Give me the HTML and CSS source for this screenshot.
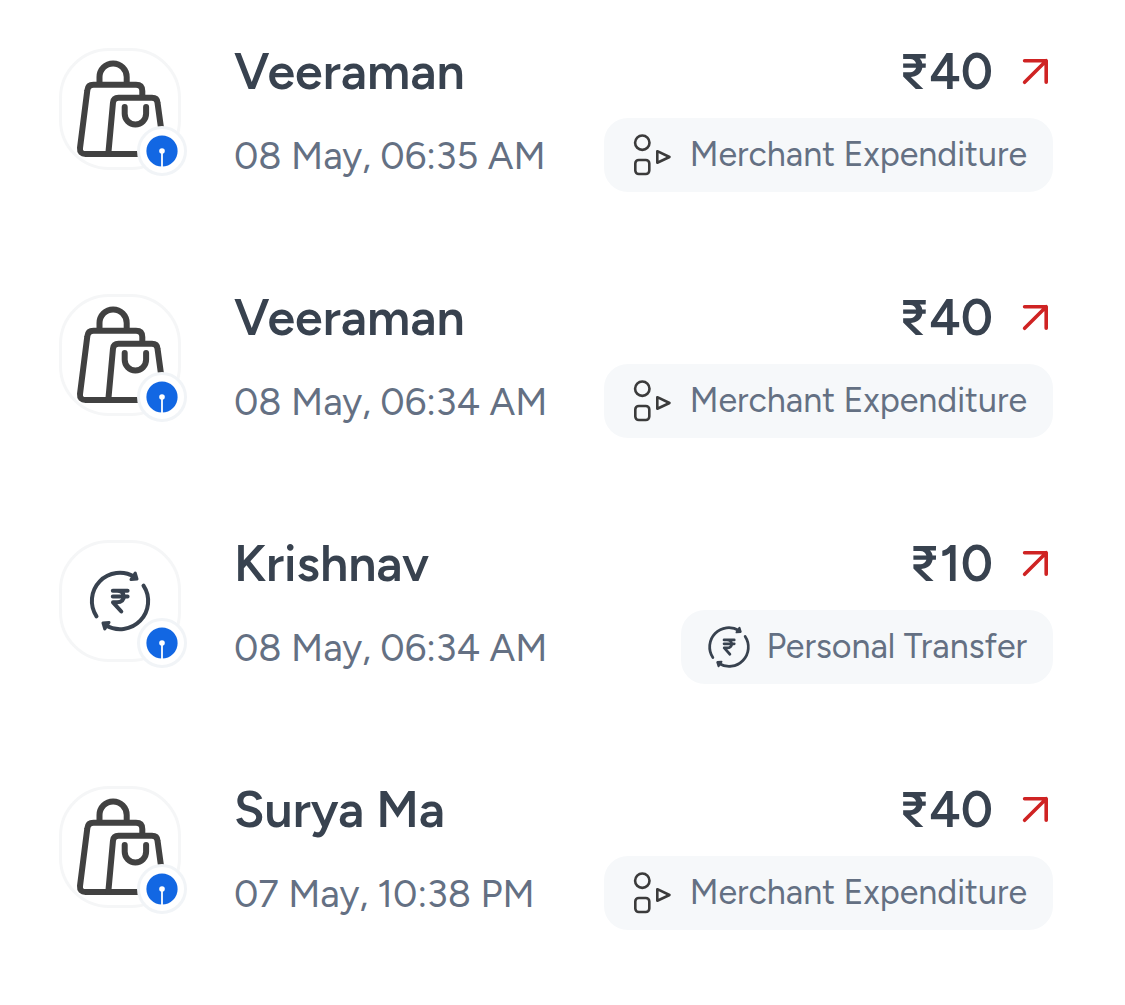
FILE: index.html
```html
<!DOCTYPE html>
<html lang="en">
<head>
<meta charset="utf-8">
<meta name="viewport" content="width=device-width, initial-scale=1">
<title>Transactions</title>
<link rel="stylesheet" href="styles.css">
</head>
<body>
<svg class="sprite" aria-hidden="true">
  <symbol id="bags" viewBox="0 0 116 116">
    <g transform="translate(-3 -3)" fill="none" stroke="#414141" stroke-width="6" stroke-linecap="round" stroke-linejoin="round">
      <path d="M40.500 36V29a13.600 13.600 0 0 1 27.200 0v7"/>
      <path d="M83.300 47.500V43q0-6.300-6.300-6.300H34.500q-5.700 0-6.200 5.700L21 100q-.4 6 5.600 6H94"/>
      <path d="M49.300 106 54 54.500q.5-4.800 5.500-4.800h33.500q5 0 5.500 4.800L102 80"/>
      <path d="M65.700 59v6.700a10.700 10.700 0 0 0 21.400 0V59"/>
    </g>
  </symbol>
  <symbol id="transfer" viewBox="-32 -32 64 64">
    <g fill="none" stroke="#38424f" stroke-width="4" stroke-linecap="round" stroke-linejoin="round">
      <path d="M-23.500 15.300A28 28 0 0 1 14.500-24"/>
      <path d="M23.500-15.300A28 28 0 0 1-14.500 24"/>
      <path stroke-width="3" fill="#38424f" d="M15.200-28 17-22 11-21.400z"/>
      <path stroke-width="3" fill="#38424f" d="M-15.200 28-17 22-11 21.400z"/>
      <path d="M-7.200-10.300H7.600M-7.200-4.600H7.600M-3-10.300C6-10.300 6.500 1.300-3 1.300H-7L1.300 10.500"/>
    </g>
  </symbol>
  <symbol id="merchant" viewBox="0 0 44 44">
    <g fill="none" stroke="#3b3b3b" stroke-width="2.600" stroke-linejoin="round">
      <circle cx="12.300" cy="9.700" r="7.200"/>
      <rect x="5.300" y="27" width="14" height="14" rx="3.500"/>
      <path d="M27.300 18.200 39.500 24 27.300 29.700z"/>
    </g>
  </symbol>
  <symbol id="outgoing" viewBox="0 0 32 32">
    <path d="M3.600 4.700H25.200V26.300M25.200 4.700 3.600 26.300" fill="none" stroke="#cf2323" stroke-width="3.600" stroke-linecap="round" stroke-linejoin="round"/>
  </symbol>
  <symbol id="bank" viewBox="0 0 32 32">
    <circle cx="16" cy="16" r="15.600" fill="#1267e3"/>
    <circle cx="16" cy="16" r="2.800" fill="#fff"/>
    <path d="M16 16V32" stroke="#fff" stroke-width="1.800"/>
  </symbol>
</svg>

<main>
  <ul class="transactions">
    <li class="transaction">
      <div class="avatar"><svg class="avatar-icon"><use href="#bags"/></svg><span class="badge"><svg class="bank-icon"><use href="#bank"/></svg></span></div>
      <div class="details"><h2 class="name">Veeraman</h2><time class="date">08 May, 06:35 AM</time></div>
      <div class="summary">
        <p class="amount">₹40<svg class="arrow"><use href="#outgoing"/></svg></p>
        <span class="category"><svg class="category-icon"><use href="#merchant"/></svg>Merchant Expenditure</span>
      </div>
    </li>
    <li class="transaction">
      <div class="avatar"><svg class="avatar-icon"><use href="#bags"/></svg><span class="badge"><svg class="bank-icon"><use href="#bank"/></svg></span></div>
      <div class="details"><h2 class="name">Veeraman</h2><time class="date">08 May, 06:34 AM</time></div>
      <div class="summary">
        <p class="amount">₹40<svg class="arrow"><use href="#outgoing"/></svg></p>
        <span class="category"><svg class="category-icon"><use href="#merchant"/></svg>Merchant Expenditure</span>
      </div>
    </li>
    <li class="transaction">
      <div class="avatar"><svg class="avatar-icon avatar-icon-small"><use href="#transfer"/></svg><span class="badge"><svg class="bank-icon"><use href="#bank"/></svg></span></div>
      <div class="details"><h2 class="name">Krishnav</h2><time class="date">08 May, 06:34 AM</time></div>
      <div class="summary">
        <p class="amount">₹10<svg class="arrow"><use href="#outgoing"/></svg></p>
        <span class="category"><svg class="category-icon"><use href="#transfer"/></svg>Personal Transfer</span>
      </div>
    </li>
    <li class="transaction">
      <div class="avatar"><svg class="avatar-icon"><use href="#bags"/></svg><span class="badge"><svg class="bank-icon"><use href="#bank"/></svg></span></div>
      <div class="details"><h2 class="name">Surya Ma</h2><time class="date">07 May, 10:38 PM</time></div>
      <div class="summary">
        <p class="amount">₹40<svg class="arrow"><use href="#outgoing"/></svg></p>
        <span class="category"><svg class="category-icon"><use href="#merchant"/></svg>Merchant Expenditure</span>
      </div>
    </li>
  </ul>
</main>
</body>
</html>
```
FILE: styles.css
```css
* {
  box-sizing: border-box;
}

body {
  margin: 0;
  background: #fff;
  color: #38424f;
  font-family: Figtree, Inter, "Liberation Sans", sans-serif;
}

.sprite {
  position: absolute;
  width: 0;
  height: 0;
}

.transactions {
  display: grid;
  gap: 96px;
  margin: 0;
  padding: 42px 72px 42px 59px;
  list-style: none;
}

.transaction {
  display: flex;
  align-items: flex-start;
}

.avatar {
  position: relative;
  display: flex;
  flex: none;
  align-items: center;
  justify-content: center;
  width: 122px;
  height: 122px;
  margin: 6px 53px 0 0;
  border: 3px solid #f5f6f7;
  border-radius: 50px;
}

.avatar-icon {
  width: 116px;
  height: 116px;
}

.avatar-icon-small {
  width: 64px;
  height: 64px;
}

.badge {
  position: absolute;
  right: -9px;
  bottom: -9px;
  display: flex;
  align-items: center;
  justify-content: center;
  width: 50px;
  height: 50px;
  border: 3px solid #f1f4f7;
  border-radius: 50%;
  background: #fff;
}

.bank-icon {
  width: 32px;
  height: 32px;
}

.details {
  display: flex;
  flex: 1;
  flex-direction: column;
  gap: 30px;
  white-space: nowrap;
}

.name,
.amount {
  margin: 0;
  font-size: 50px;
  font-weight: 600;
  line-height: 60px;
}

.date {
  color: #647083;
  font-size: 38px;
  line-height: 48px;
}

.summary {
  display: flex;
  flex: none;
  flex-direction: column;
  align-items: flex-end;
  gap: 16px;
}

.amount {
  display: flex;
  align-items: center;
  gap: 28px;
}

.arrow {
  width: 32px;
  height: 32px;
}

.category {
  display: flex;
  align-items: center;
  gap: 16px;
  height: 74px;
  padding: 0 26px;
  border-radius: 24px;
  background: #f6f8fa;
  color: #647083;
  font-size: 34px;
  line-height: 44px;
  white-space: nowrap;
}

.category-icon {
  width: 44px;
  height: 44px;
}
```
